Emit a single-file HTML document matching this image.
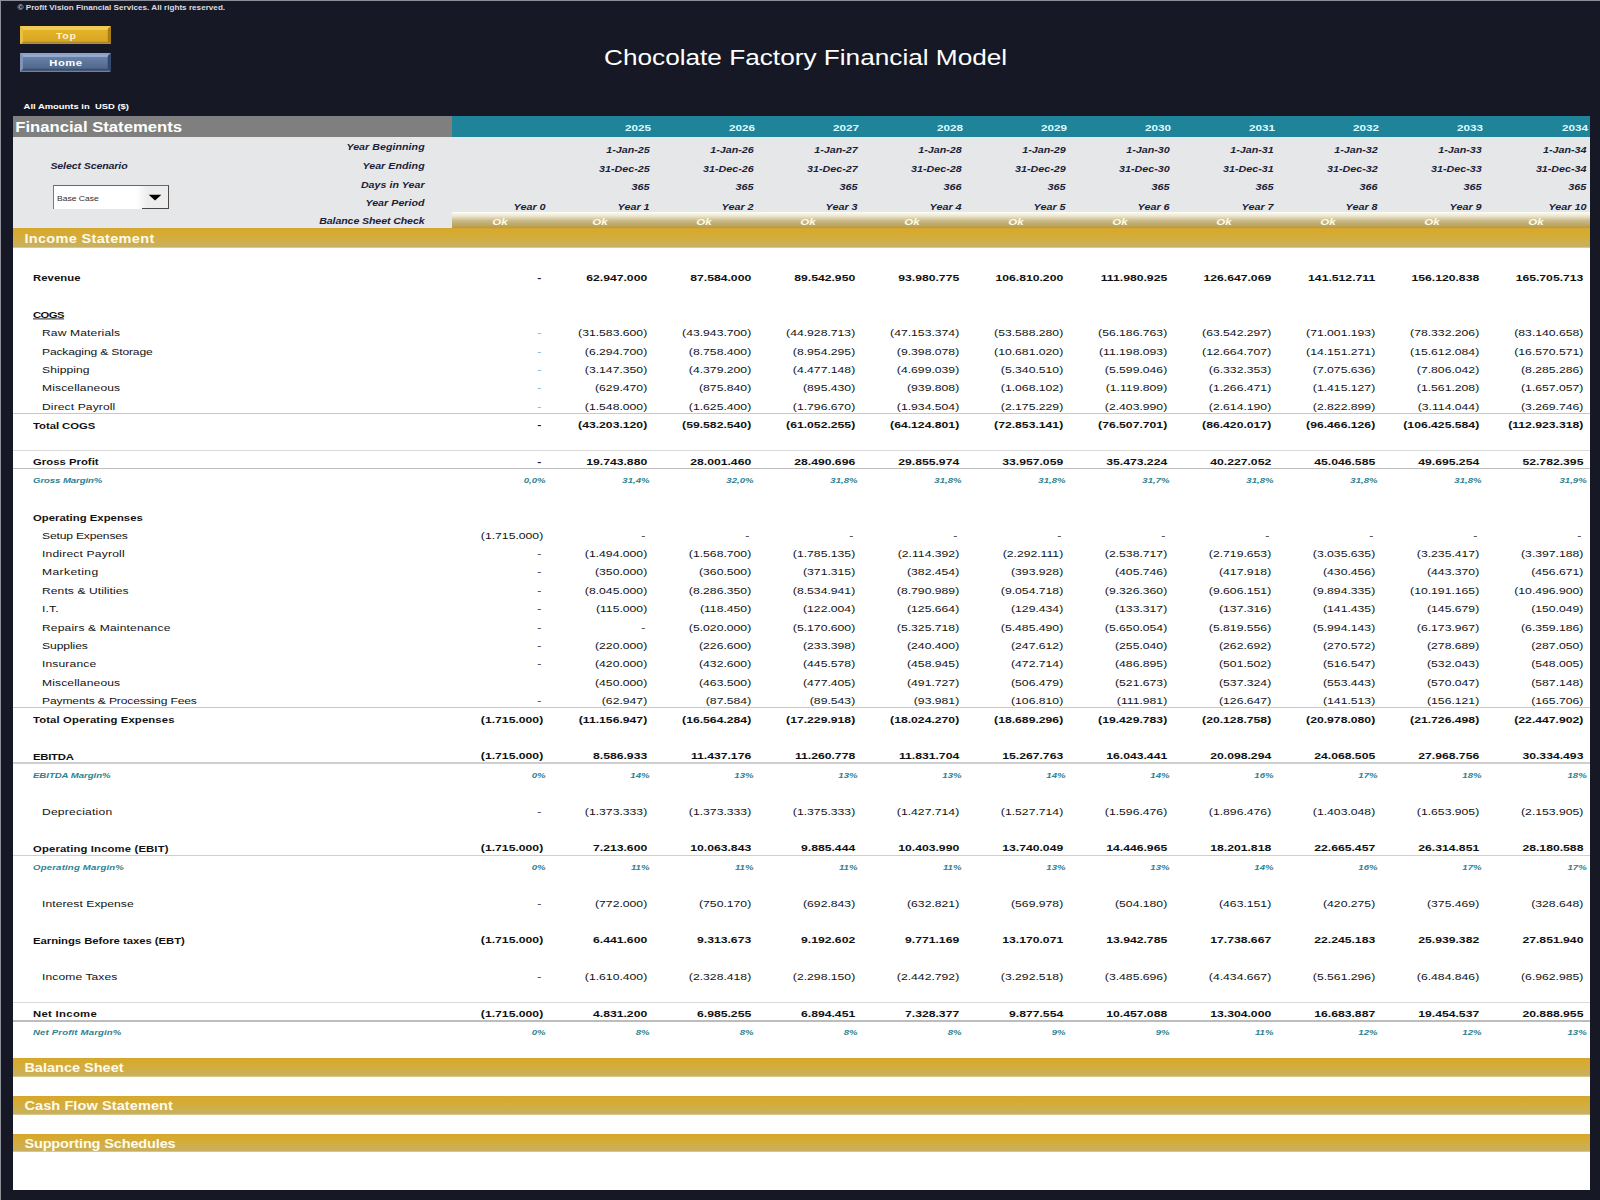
<!DOCTYPE html>
<html lang="en">
<head>
<meta charset="utf-8">
<title>Chocolate Factory Financial Model</title>
<style>
*{margin:0;padding:0;box-sizing:border-box}
html,body{width:1600px;height:1200px;overflow:hidden}
body{background:#161925;font-family:"Liberation Sans",sans-serif;position:relative;color:#141414}
.abs{position:absolute}
.t{position:absolute;white-space:nowrap;line-height:1;color:#121212}
.b{font-weight:bold}
.i{font-style:italic}
.sheet{position:absolute;left:13px;top:116px;width:1577px;height:1074px;background:#fff}
.hdr-gray{position:absolute;left:13px;top:116px;width:439px;height:21px;background:#7f7f7f}
.hdr-teal{position:absolute;left:452px;top:116px;width:1138px;height:21px;background:#1f8399}
.info{position:absolute;left:13px;top:137px;width:1577px;height:91px;background:#e6e7e9}
.okbar{position:absolute;left:452px;top:212.4px;width:1138px;height:16px;background:linear-gradient(#fffef6 0%,#ece6d0 25%,#c9b988 55%,#b79a45 100%)}
.gold{position:absolute;left:13px;width:1577px;height:18.7px;background:linear-gradient(#cfa433 0,#d8a92a 7%,#d3ac3b 45%,#c9b062 94%,#e6d9a6 100%)}
.rule{position:absolute;left:13px;width:1577px}
.btn{position:absolute;left:20px;width:90px;height:18.5px;border-radius:2px}
</style>
</head>
<body>

<div class="abs" style="left:0;top:0;width:1600px;height:1px;background:#8d8f96"></div>
<div class="abs" style="left:0;top:0;width:1px;height:1200px;background:#8d8f96"></div>
<div class="t b" style="left:17.50px;top:3.59px;font-size:8.1px;transform:scaleY(0.84);letter-spacing:0.027px;color:#dcdce0">© Profit Vision Financial Services. All rights reserved.</div>
<svg class="abs" style="left:20.1px;top:25.6px" width="90.8" height="18.8" viewBox="0 0 90.8 18.8"><defs><linearGradient id="gf" x1="0" y1="0" x2="0" y2="1"><stop offset="0" stop-color="#e6b52e"/><stop offset="1" stop-color="#d8a31c"/></linearGradient></defs><rect x="0" y="0" width="90.8" height="18.8" fill="url(#gf)"/><polygon points="0,0 90.8,0 87.8,3.0 3.0,3.0" fill="#f2cb4e"/><polygon points="0,18.8 90.8,18.8 87.8,15.8 3.0,15.8" fill="#a98636"/><polygon points="0,0 3.0,3.0 3.0,15.8 0,18.8" fill="#e9c042"/><polygon points="90.8,0 87.8,3.0 87.8,15.8 90.8,18.8" fill="#a57d16"/><rect x="3.0" y="2.7" width="84.8" height="0.9" fill="#f7dc7c"/><rect x="0" y="17.8" width="89.8" height="1" fill="#d3b867"/></svg>
<svg class="abs" style="left:20.1px;top:53.0px" width="90.8" height="18.8" viewBox="0 0 90.8 18.8"><defs><linearGradient id="hf" x1="0" y1="0" x2="0" y2="1"><stop offset="0" stop-color="#7189b0"/><stop offset="1" stop-color="#4b6186"/></linearGradient></defs><rect x="0" y="0" width="90.8" height="18.8" fill="url(#hf)"/><polygon points="0,0 90.8,0 87.8,3.0 3.0,3.0" fill="#8aa2c8"/><polygon points="0,18.8 90.8,18.8 87.8,15.8 3.0,15.8" fill="#3a4c6d"/><polygon points="0,0 3.0,3.0 3.0,15.8 0,18.8" fill="#7d95bc"/><polygon points="90.8,0 87.8,3.0 87.8,15.8 90.8,18.8" fill="#33456a"/><rect x="3.0" y="2.7" width="84.8" height="0.9" fill="#aec4ea"/><rect x="0" y="17.8" width="89.8" height="1" fill="#7f8fac"/></svg>
<div class="t b" style="left:55.96px;top:31.08px;font-size:10.6px;transform:scaleY(0.85);letter-spacing:0.720px;color:#fff3d2">Top</div>
<div class="t b" style="left:49.29px;top:58.14px;font-size:11.2px;transform:scaleY(0.84);letter-spacing:0.571px;color:#ffffff">Home</div>
<div class="t" style="left:604.00px;top:44.18px;font-size:26.2px;transform:scaleY(0.85);color:#ffffff">Chocolate Factory Financial Model</div>
<div class="t b" style="left:23.60px;top:101.97px;font-size:9.44px;transform:scaleY(0.83);color:#ffffff">All Amounts in  USD ($)</div>
<div class="sheet"></div>
<div class="hdr-gray"></div><div class="hdr-teal"></div>
<div class="info"></div>
<div class="abs" style="left:452px;top:136.8px;width:1138px;height:1.2px;background:#cfeef6"></div>
<div class="okbar"></div>
<div class="t b" style="left:15.20px;top:119.84px;font-size:16.7px;transform:scaleY(0.865);color:#ffffff">Financial Statements</div>
<div class="t b" style="right:949.00px;top:121.53px;font-size:11.7px;transform:scaleY(0.82);color:#dcfbff">2025</div>
<div class="t b" style="right:845.00px;top:121.53px;font-size:11.7px;transform:scaleY(0.82);color:#dcfbff">2026</div>
<div class="t b" style="right:741.00px;top:121.53px;font-size:11.7px;transform:scaleY(0.82);color:#dcfbff">2027</div>
<div class="t b" style="right:637.00px;top:121.53px;font-size:11.7px;transform:scaleY(0.82);color:#dcfbff">2028</div>
<div class="t b" style="right:533.00px;top:121.53px;font-size:11.7px;transform:scaleY(0.82);color:#dcfbff">2029</div>
<div class="t b" style="right:429.00px;top:121.53px;font-size:11.7px;transform:scaleY(0.82);color:#dcfbff">2030</div>
<div class="t b" style="right:325.00px;top:121.53px;font-size:11.7px;transform:scaleY(0.82);color:#dcfbff">2031</div>
<div class="t b" style="right:221.00px;top:121.53px;font-size:11.7px;transform:scaleY(0.82);color:#dcfbff">2032</div>
<div class="t b" style="right:117.00px;top:121.53px;font-size:11.7px;transform:scaleY(0.82);color:#dcfbff">2033</div>
<div class="t b" style="right:12.00px;top:121.53px;font-size:11.7px;transform:scaleY(0.82);color:#dcfbff">2034</div>
<div class="t b i" style="right:1175.33px;top:141.58px;font-size:10.6px;transform:scaleY(0.85);letter-spacing:0.068px;color:#1b2136">Year Beginning</div>
<div class="t b i" style="right:1175.32px;top:160.58px;font-size:10.6px;transform:scaleY(0.85);letter-spacing:0.077px;color:#1b2136">Year Ending</div>
<div class="t b i" style="right:1175.34px;top:179.58px;font-size:10.6px;transform:scaleY(0.85);letter-spacing:0.062px;color:#1b2136">Days in Year</div>
<div class="t b i" style="right:1175.33px;top:198.18px;font-size:10.6px;transform:scaleY(0.85);letter-spacing:0.071px;color:#1b2136">Year Period</div>
<div class="t b i" style="right:1175.50px;top:215.58px;font-size:10.6px;transform:scaleY(0.85);letter-spacing:-0.102px;color:#1b2136">Balance Sheet Check</div>
<div class="t b i" style="left:50.40px;top:160.68px;font-size:10.6px;transform:scaleY(0.85);letter-spacing:-0.117px;color:#1b2136">Select Scenario</div>
<div class="abs" style="left:53px;top:184.8px;width:116px;height:24px;background:linear-gradient(90deg,#fff 0,#fff 72%,#ededed 82%,#ececec 100%);border-top:1.3px solid #6a6a6a;border-left:1.2px solid #7a7a7a;border-right:1.2px solid #4a4a4a"></div>
<div class="abs" style="left:142px;top:207.6px;width:27px;height:1.2px;background:#4a4a4a"></div>
<svg class="abs" style="left:148px;top:194px" width="14" height="7" viewBox="0 0 14 7"><path d="M0.7 0.7 H13.4 L7.05 6.4 Z" fill="#000"/></svg>
<div class="t" style="left:57.00px;top:194.01px;font-size:8.56px;transform:scaleY(0.88);color:#303030">Base Case</div>
<div class="t b i" style="right:950.40px;top:145.04px;font-size:10.7px;transform:scaleY(0.84);color:#1b2136">1-Jan-25</div>
<div class="t b i" style="right:950.40px;top:163.94px;font-size:10.7px;transform:scaleY(0.84);color:#1b2136">31-Dec-25</div>
<div class="t b i" style="right:950.40px;top:182.48px;font-size:10.9px;transform:scaleY(0.84);color:#1b2136">365</div>
<div class="t b i" style="right:846.40px;top:145.04px;font-size:10.7px;transform:scaleY(0.84);color:#1b2136">1-Jan-26</div>
<div class="t b i" style="right:846.40px;top:163.94px;font-size:10.7px;transform:scaleY(0.84);color:#1b2136">31-Dec-26</div>
<div class="t b i" style="right:846.40px;top:182.48px;font-size:10.9px;transform:scaleY(0.84);color:#1b2136">365</div>
<div class="t b i" style="right:742.40px;top:145.04px;font-size:10.7px;transform:scaleY(0.84);color:#1b2136">1-Jan-27</div>
<div class="t b i" style="right:742.40px;top:163.94px;font-size:10.7px;transform:scaleY(0.84);color:#1b2136">31-Dec-27</div>
<div class="t b i" style="right:742.40px;top:182.48px;font-size:10.9px;transform:scaleY(0.84);color:#1b2136">365</div>
<div class="t b i" style="right:638.40px;top:145.04px;font-size:10.7px;transform:scaleY(0.84);color:#1b2136">1-Jan-28</div>
<div class="t b i" style="right:638.40px;top:163.94px;font-size:10.7px;transform:scaleY(0.84);color:#1b2136">31-Dec-28</div>
<div class="t b i" style="right:638.40px;top:182.48px;font-size:10.9px;transform:scaleY(0.84);color:#1b2136">366</div>
<div class="t b i" style="right:534.40px;top:145.04px;font-size:10.7px;transform:scaleY(0.84);color:#1b2136">1-Jan-29</div>
<div class="t b i" style="right:534.40px;top:163.94px;font-size:10.7px;transform:scaleY(0.84);color:#1b2136">31-Dec-29</div>
<div class="t b i" style="right:534.40px;top:182.48px;font-size:10.9px;transform:scaleY(0.84);color:#1b2136">365</div>
<div class="t b i" style="right:430.40px;top:145.04px;font-size:10.7px;transform:scaleY(0.84);color:#1b2136">1-Jan-30</div>
<div class="t b i" style="right:430.40px;top:163.94px;font-size:10.7px;transform:scaleY(0.84);color:#1b2136">31-Dec-30</div>
<div class="t b i" style="right:430.40px;top:182.48px;font-size:10.9px;transform:scaleY(0.84);color:#1b2136">365</div>
<div class="t b i" style="right:326.40px;top:145.04px;font-size:10.7px;transform:scaleY(0.84);color:#1b2136">1-Jan-31</div>
<div class="t b i" style="right:326.40px;top:163.94px;font-size:10.7px;transform:scaleY(0.84);color:#1b2136">31-Dec-31</div>
<div class="t b i" style="right:326.40px;top:182.48px;font-size:10.9px;transform:scaleY(0.84);color:#1b2136">365</div>
<div class="t b i" style="right:222.40px;top:145.04px;font-size:10.7px;transform:scaleY(0.84);color:#1b2136">1-Jan-32</div>
<div class="t b i" style="right:222.40px;top:163.94px;font-size:10.7px;transform:scaleY(0.84);color:#1b2136">31-Dec-32</div>
<div class="t b i" style="right:222.40px;top:182.48px;font-size:10.9px;transform:scaleY(0.84);color:#1b2136">366</div>
<div class="t b i" style="right:118.40px;top:145.04px;font-size:10.7px;transform:scaleY(0.84);color:#1b2136">1-Jan-33</div>
<div class="t b i" style="right:118.40px;top:163.94px;font-size:10.7px;transform:scaleY(0.84);color:#1b2136">31-Dec-33</div>
<div class="t b i" style="right:118.40px;top:182.48px;font-size:10.9px;transform:scaleY(0.84);color:#1b2136">365</div>
<div class="t b i" style="right:13.60px;top:145.04px;font-size:10.7px;transform:scaleY(0.84);color:#1b2136">1-Jan-34</div>
<div class="t b i" style="right:13.60px;top:163.94px;font-size:10.7px;transform:scaleY(0.84);color:#1b2136">31-Dec-34</div>
<div class="t b i" style="right:13.60px;top:182.48px;font-size:10.9px;transform:scaleY(0.84);color:#1b2136">365</div>
<div class="t b i" style="right:1054.40px;top:201.66px;font-size:10.8px;transform:scaleY(0.84);color:#1b2136">Year 0</div>
<div class="t b i" style="left:492.33px;top:216.50px;font-size:11.5px;transform:scaleY(0.84);color:#fffbe6">Ok</div>
<div class="t b i" style="right:950.40px;top:201.66px;font-size:10.8px;transform:scaleY(0.84);color:#1b2136">Year 1</div>
<div class="t b i" style="left:592.33px;top:216.50px;font-size:11.5px;transform:scaleY(0.84);color:#fffbe6">Ok</div>
<div class="t b i" style="right:846.40px;top:201.66px;font-size:10.8px;transform:scaleY(0.84);color:#1b2136">Year 2</div>
<div class="t b i" style="left:696.33px;top:216.50px;font-size:11.5px;transform:scaleY(0.84);color:#fffbe6">Ok</div>
<div class="t b i" style="right:742.40px;top:201.66px;font-size:10.8px;transform:scaleY(0.84);color:#1b2136">Year 3</div>
<div class="t b i" style="left:800.33px;top:216.50px;font-size:11.5px;transform:scaleY(0.84);color:#fffbe6">Ok</div>
<div class="t b i" style="right:638.40px;top:201.66px;font-size:10.8px;transform:scaleY(0.84);color:#1b2136">Year 4</div>
<div class="t b i" style="left:904.33px;top:216.50px;font-size:11.5px;transform:scaleY(0.84);color:#fffbe6">Ok</div>
<div class="t b i" style="right:534.40px;top:201.66px;font-size:10.8px;transform:scaleY(0.84);color:#1b2136">Year 5</div>
<div class="t b i" style="left:1008.33px;top:216.50px;font-size:11.5px;transform:scaleY(0.84);color:#fffbe6">Ok</div>
<div class="t b i" style="right:430.40px;top:201.66px;font-size:10.8px;transform:scaleY(0.84);color:#1b2136">Year 6</div>
<div class="t b i" style="left:1112.33px;top:216.50px;font-size:11.5px;transform:scaleY(0.84);color:#fffbe6">Ok</div>
<div class="t b i" style="right:326.40px;top:201.66px;font-size:10.8px;transform:scaleY(0.84);color:#1b2136">Year 7</div>
<div class="t b i" style="left:1216.33px;top:216.50px;font-size:11.5px;transform:scaleY(0.84);color:#fffbe6">Ok</div>
<div class="t b i" style="right:222.40px;top:201.66px;font-size:10.8px;transform:scaleY(0.84);color:#1b2136">Year 8</div>
<div class="t b i" style="left:1320.33px;top:216.50px;font-size:11.5px;transform:scaleY(0.84);color:#fffbe6">Ok</div>
<div class="t b i" style="right:118.40px;top:201.66px;font-size:10.8px;transform:scaleY(0.84);color:#1b2136">Year 9</div>
<div class="t b i" style="left:1424.33px;top:216.50px;font-size:11.5px;transform:scaleY(0.84);color:#fffbe6">Ok</div>
<div class="t b i" style="right:13.60px;top:201.66px;font-size:10.8px;transform:scaleY(0.84);color:#1b2136">Year 10</div>
<div class="t b i" style="left:1528.33px;top:216.50px;font-size:11.5px;transform:scaleY(0.84);color:#fffbe6">Ok</div>
<div class="gold" style="top:228.4px;height:19.5px"></div>
<div class="t b" style="left:24.40px;top:231.83px;font-size:14.5px;transform:scaleY(0.82);letter-spacing:0.332px;color:#fffbea">Income Statement</div>
<div class="gold" style="top:1058.2px;height:18.6px"></div>
<div class="t b" style="left:24.40px;top:1061.43px;font-size:14.5px;transform:scaleY(0.82);color:#fffbea">Balance Sheet</div>
<div class="gold" style="top:1095.9px;height:18.7px"></div>
<div class="t b" style="left:24.40px;top:1099.13px;font-size:14.5px;transform:scaleY(0.82);letter-spacing:0.103px;color:#fffbea">Cash Flow Statement</div>
<div class="gold" style="top:1133.7px;height:18.8px"></div>
<div class="t b" style="left:24.40px;top:1136.73px;font-size:14.5px;transform:scaleY(0.82);letter-spacing:-0.139px;color:#fffbea">Supporting Schedules</div>
<div class="rule" style="top:413px;height:1px;background:#c8c8c8"></div>
<div class="rule" style="top:449.6px;height:1px;background:#dadada"></div>
<div class="rule" style="top:467.6px;height:1.6px;background:#bdbdbd"></div>
<div class="rule" style="top:706.8px;height:1px;background:#c8c8c8"></div>
<div class="rule" style="top:762.0px;height:1.6px;background:#cfcfcf"></div>
<div class="rule" style="top:854.5px;height:1.6px;background:#cfcfcf"></div>
<div class="rule" style="top:1002px;height:1px;background:#dadada"></div>
<div class="rule" style="top:1020.0px;height:1.6px;background:#bdbdbd"></div>
<div class="t b" style="left:33.00px;top:272.30px;font-size:11.3px;transform:scaleY(0.88);letter-spacing:0.071px;color:#111">Revenue</div>
<div class="t b" style="right:1058.80px;top:271.92px;font-size:12.2px;transform:scaleY(0.8);color:#111">-</div>
<div class="t b" style="right:952.80px;top:271.92px;font-size:12.2px;transform:scaleY(0.8);color:#111">62.947.000</div>
<div class="t b" style="right:848.80px;top:271.92px;font-size:12.2px;transform:scaleY(0.8);color:#111">87.584.000</div>
<div class="t b" style="right:744.80px;top:271.92px;font-size:12.2px;transform:scaleY(0.8);color:#111">89.542.950</div>
<div class="t b" style="right:640.80px;top:271.92px;font-size:12.2px;transform:scaleY(0.8);color:#111">93.980.775</div>
<div class="t b" style="right:536.80px;top:271.92px;font-size:12.2px;transform:scaleY(0.8);color:#111">106.810.200</div>
<div class="t b" style="right:432.80px;top:271.92px;font-size:12.2px;transform:scaleY(0.8);color:#111">111.980.925</div>
<div class="t b" style="right:328.80px;top:271.92px;font-size:12.2px;transform:scaleY(0.8);color:#111">126.647.069</div>
<div class="t b" style="right:224.80px;top:271.92px;font-size:12.2px;transform:scaleY(0.8);color:#111">141.512.711</div>
<div class="t b" style="right:120.80px;top:271.92px;font-size:12.2px;transform:scaleY(0.8);color:#111">156.120.838</div>
<div class="t b" style="right:16.60px;top:271.92px;font-size:12.2px;transform:scaleY(0.8);color:#111">165.705.713</div>
<div class="t b" style="left:33.00px;top:309.10px;font-size:11.3px;transform:scaleY(0.88);letter-spacing:-0.544px;color:#111;text-decoration:underline;text-underline-offset:1px">COGS</div>
<div class="t" style="left:42.00px;top:327.15px;font-size:12.1px;transform:scaleY(0.81);letter-spacing:0.127px">Raw Materials</div>
<div class="t" style="right:1058.80px;top:327.12px;font-size:12.2px;transform:scaleY(0.8);color:#62aebb">-</div>
<div class="t" style="right:952.80px;top:327.12px;font-size:12.2px;transform:scaleY(0.8)">(31.583.600)</div>
<div class="t" style="right:848.80px;top:327.12px;font-size:12.2px;transform:scaleY(0.8)">(43.943.700)</div>
<div class="t" style="right:744.80px;top:327.12px;font-size:12.2px;transform:scaleY(0.8)">(44.928.713)</div>
<div class="t" style="right:640.80px;top:327.12px;font-size:12.2px;transform:scaleY(0.8)">(47.153.374)</div>
<div class="t" style="right:536.80px;top:327.12px;font-size:12.2px;transform:scaleY(0.8)">(53.588.280)</div>
<div class="t" style="right:432.80px;top:327.12px;font-size:12.2px;transform:scaleY(0.8)">(56.186.763)</div>
<div class="t" style="right:328.80px;top:327.12px;font-size:12.2px;transform:scaleY(0.8)">(63.542.297)</div>
<div class="t" style="right:224.80px;top:327.12px;font-size:12.2px;transform:scaleY(0.8)">(71.001.193)</div>
<div class="t" style="right:120.80px;top:327.12px;font-size:12.2px;transform:scaleY(0.8)">(78.332.206)</div>
<div class="t" style="right:16.60px;top:327.12px;font-size:12.2px;transform:scaleY(0.8)">(83.140.658)</div>
<div class="t" style="left:42.00px;top:345.55px;font-size:12.1px;transform:scaleY(0.81);letter-spacing:-0.162px">Packaging &amp; Storage</div>
<div class="t" style="right:1058.80px;top:345.52px;font-size:12.2px;transform:scaleY(0.8);color:#62aebb">-</div>
<div class="t" style="right:952.80px;top:345.52px;font-size:12.2px;transform:scaleY(0.8)">(6.294.700)</div>
<div class="t" style="right:848.80px;top:345.52px;font-size:12.2px;transform:scaleY(0.8)">(8.758.400)</div>
<div class="t" style="right:744.80px;top:345.52px;font-size:12.2px;transform:scaleY(0.8)">(8.954.295)</div>
<div class="t" style="right:640.80px;top:345.52px;font-size:12.2px;transform:scaleY(0.8)">(9.398.078)</div>
<div class="t" style="right:536.80px;top:345.52px;font-size:12.2px;transform:scaleY(0.8)">(10.681.020)</div>
<div class="t" style="right:432.80px;top:345.52px;font-size:12.2px;transform:scaleY(0.8)">(11.198.093)</div>
<div class="t" style="right:328.80px;top:345.52px;font-size:12.2px;transform:scaleY(0.8)">(12.664.707)</div>
<div class="t" style="right:224.80px;top:345.52px;font-size:12.2px;transform:scaleY(0.8)">(14.151.271)</div>
<div class="t" style="right:120.80px;top:345.52px;font-size:12.2px;transform:scaleY(0.8)">(15.612.084)</div>
<div class="t" style="right:16.60px;top:345.52px;font-size:12.2px;transform:scaleY(0.8)">(16.570.571)</div>
<div class="t" style="left:42.00px;top:363.95px;font-size:12.1px;transform:scaleY(0.81);letter-spacing:0.063px">Shipping</div>
<div class="t" style="right:1058.80px;top:363.92px;font-size:12.2px;transform:scaleY(0.8);color:#62aebb">-</div>
<div class="t" style="right:952.80px;top:363.92px;font-size:12.2px;transform:scaleY(0.8)">(3.147.350)</div>
<div class="t" style="right:848.80px;top:363.92px;font-size:12.2px;transform:scaleY(0.8)">(4.379.200)</div>
<div class="t" style="right:744.80px;top:363.92px;font-size:12.2px;transform:scaleY(0.8)">(4.477.148)</div>
<div class="t" style="right:640.80px;top:363.92px;font-size:12.2px;transform:scaleY(0.8)">(4.699.039)</div>
<div class="t" style="right:536.80px;top:363.92px;font-size:12.2px;transform:scaleY(0.8)">(5.340.510)</div>
<div class="t" style="right:432.80px;top:363.92px;font-size:12.2px;transform:scaleY(0.8)">(5.599.046)</div>
<div class="t" style="right:328.80px;top:363.92px;font-size:12.2px;transform:scaleY(0.8)">(6.332.353)</div>
<div class="t" style="right:224.80px;top:363.92px;font-size:12.2px;transform:scaleY(0.8)">(7.075.636)</div>
<div class="t" style="right:120.80px;top:363.92px;font-size:12.2px;transform:scaleY(0.8)">(7.806.042)</div>
<div class="t" style="right:16.60px;top:363.92px;font-size:12.2px;transform:scaleY(0.8)">(8.285.286)</div>
<div class="t" style="left:42.00px;top:382.35px;font-size:12.1px;transform:scaleY(0.81);letter-spacing:0.125px">Miscellaneous</div>
<div class="t" style="right:1058.80px;top:382.32px;font-size:12.2px;transform:scaleY(0.8);color:#62aebb">-</div>
<div class="t" style="right:952.80px;top:382.32px;font-size:12.2px;transform:scaleY(0.8)">(629.470)</div>
<div class="t" style="right:848.80px;top:382.32px;font-size:12.2px;transform:scaleY(0.8)">(875.840)</div>
<div class="t" style="right:744.80px;top:382.32px;font-size:12.2px;transform:scaleY(0.8)">(895.430)</div>
<div class="t" style="right:640.80px;top:382.32px;font-size:12.2px;transform:scaleY(0.8)">(939.808)</div>
<div class="t" style="right:536.80px;top:382.32px;font-size:12.2px;transform:scaleY(0.8)">(1.068.102)</div>
<div class="t" style="right:432.80px;top:382.32px;font-size:12.2px;transform:scaleY(0.8)">(1.119.809)</div>
<div class="t" style="right:328.80px;top:382.32px;font-size:12.2px;transform:scaleY(0.8)">(1.266.471)</div>
<div class="t" style="right:224.80px;top:382.32px;font-size:12.2px;transform:scaleY(0.8)">(1.415.127)</div>
<div class="t" style="right:120.80px;top:382.32px;font-size:12.2px;transform:scaleY(0.8)">(1.561.208)</div>
<div class="t" style="right:16.60px;top:382.32px;font-size:12.2px;transform:scaleY(0.8)">(1.657.057)</div>
<div class="t" style="left:42.00px;top:400.75px;font-size:12.1px;transform:scaleY(0.81);letter-spacing:0.104px">Direct Payroll</div>
<div class="t" style="right:1058.80px;top:400.72px;font-size:12.2px;transform:scaleY(0.8);color:#62aebb">-</div>
<div class="t" style="right:952.80px;top:400.72px;font-size:12.2px;transform:scaleY(0.8)">(1.548.000)</div>
<div class="t" style="right:848.80px;top:400.72px;font-size:12.2px;transform:scaleY(0.8)">(1.625.400)</div>
<div class="t" style="right:744.80px;top:400.72px;font-size:12.2px;transform:scaleY(0.8)">(1.796.670)</div>
<div class="t" style="right:640.80px;top:400.72px;font-size:12.2px;transform:scaleY(0.8)">(1.934.504)</div>
<div class="t" style="right:536.80px;top:400.72px;font-size:12.2px;transform:scaleY(0.8)">(2.175.229)</div>
<div class="t" style="right:432.80px;top:400.72px;font-size:12.2px;transform:scaleY(0.8)">(2.403.990)</div>
<div class="t" style="right:328.80px;top:400.72px;font-size:12.2px;transform:scaleY(0.8)">(2.614.190)</div>
<div class="t" style="right:224.80px;top:400.72px;font-size:12.2px;transform:scaleY(0.8)">(2.822.899)</div>
<div class="t" style="right:120.80px;top:400.72px;font-size:12.2px;transform:scaleY(0.8)">(3.114.044)</div>
<div class="t" style="right:16.60px;top:400.72px;font-size:12.2px;transform:scaleY(0.8)">(3.269.746)</div>
<div class="t b" style="left:33.00px;top:419.50px;font-size:11.3px;transform:scaleY(0.88);letter-spacing:-0.027px;color:#111">Total COGS</div>
<div class="t b" style="right:1058.80px;top:419.12px;font-size:12.2px;transform:scaleY(0.8);color:#111">-</div>
<div class="t b" style="right:952.80px;top:419.12px;font-size:12.2px;transform:scaleY(0.8);color:#111">(43.203.120)</div>
<div class="t b" style="right:848.80px;top:419.12px;font-size:12.2px;transform:scaleY(0.8);color:#111">(59.582.540)</div>
<div class="t b" style="right:744.80px;top:419.12px;font-size:12.2px;transform:scaleY(0.8);color:#111">(61.052.255)</div>
<div class="t b" style="right:640.80px;top:419.12px;font-size:12.2px;transform:scaleY(0.8);color:#111">(64.124.801)</div>
<div class="t b" style="right:536.80px;top:419.12px;font-size:12.2px;transform:scaleY(0.8);color:#111">(72.853.141)</div>
<div class="t b" style="right:432.80px;top:419.12px;font-size:12.2px;transform:scaleY(0.8);color:#111">(76.507.701)</div>
<div class="t b" style="right:328.80px;top:419.12px;font-size:12.2px;transform:scaleY(0.8);color:#111">(86.420.017)</div>
<div class="t b" style="right:224.80px;top:419.12px;font-size:12.2px;transform:scaleY(0.8);color:#111">(96.466.126)</div>
<div class="t b" style="right:120.80px;top:419.12px;font-size:12.2px;transform:scaleY(0.8);color:#111">(106.425.584)</div>
<div class="t b" style="right:16.60px;top:419.12px;font-size:12.2px;transform:scaleY(0.8);color:#111">(112.923.318)</div>
<div class="t b" style="left:33.00px;top:456.30px;font-size:11.3px;transform:scaleY(0.88);letter-spacing:0.025px;color:#111">Gross Profit</div>
<div class="t b" style="right:1058.80px;top:455.92px;font-size:12.2px;transform:scaleY(0.8);color:#111">-</div>
<div class="t b" style="right:952.80px;top:455.92px;font-size:12.2px;transform:scaleY(0.8);color:#111">19.743.880</div>
<div class="t b" style="right:848.80px;top:455.92px;font-size:12.2px;transform:scaleY(0.8);color:#111">28.001.460</div>
<div class="t b" style="right:744.80px;top:455.92px;font-size:12.2px;transform:scaleY(0.8);color:#111">28.490.696</div>
<div class="t b" style="right:640.80px;top:455.92px;font-size:12.2px;transform:scaleY(0.8);color:#111">29.855.974</div>
<div class="t b" style="right:536.80px;top:455.92px;font-size:12.2px;transform:scaleY(0.8);color:#111">33.957.059</div>
<div class="t b" style="right:432.80px;top:455.92px;font-size:12.2px;transform:scaleY(0.8);color:#111">35.473.224</div>
<div class="t b" style="right:328.80px;top:455.92px;font-size:12.2px;transform:scaleY(0.8);color:#111">40.227.052</div>
<div class="t b" style="right:224.80px;top:455.92px;font-size:12.2px;transform:scaleY(0.8);color:#111">45.046.585</div>
<div class="t b" style="right:120.80px;top:455.92px;font-size:12.2px;transform:scaleY(0.8);color:#111">49.695.254</div>
<div class="t b" style="right:16.60px;top:455.92px;font-size:12.2px;transform:scaleY(0.8);color:#111">52.782.395</div>
<div class="t b i" style="left:33.00px;top:476.47px;font-size:9.6px;transform:scaleY(0.82);letter-spacing:-0.086px;color:#2f8290">Gross Margin%</div>
<div class="t b i" style="right:1054.50px;top:476.47px;font-size:9.6px;transform:scaleY(0.82);color:#2f8290">0,0%</div>
<div class="t b i" style="right:950.50px;top:476.47px;font-size:9.6px;transform:scaleY(0.82);color:#2f8290">31,4%</div>
<div class="t b i" style="right:846.50px;top:476.47px;font-size:9.6px;transform:scaleY(0.82);color:#2f8290">32,0%</div>
<div class="t b i" style="right:742.50px;top:476.47px;font-size:9.6px;transform:scaleY(0.82);color:#2f8290">31,8%</div>
<div class="t b i" style="right:638.50px;top:476.47px;font-size:9.6px;transform:scaleY(0.82);color:#2f8290">31,8%</div>
<div class="t b i" style="right:534.50px;top:476.47px;font-size:9.6px;transform:scaleY(0.82);color:#2f8290">31,8%</div>
<div class="t b i" style="right:430.50px;top:476.47px;font-size:9.6px;transform:scaleY(0.82);color:#2f8290">31,7%</div>
<div class="t b i" style="right:326.50px;top:476.47px;font-size:9.6px;transform:scaleY(0.82);color:#2f8290">31,8%</div>
<div class="t b i" style="right:222.50px;top:476.47px;font-size:9.6px;transform:scaleY(0.82);color:#2f8290">31,8%</div>
<div class="t b i" style="right:118.50px;top:476.47px;font-size:9.6px;transform:scaleY(0.82);color:#2f8290">31,8%</div>
<div class="t b i" style="right:13.30px;top:476.47px;font-size:9.6px;transform:scaleY(0.82);color:#2f8290">31,9%</div>
<div class="t b" style="left:33.00px;top:511.50px;font-size:11.3px;transform:scaleY(0.88);letter-spacing:0.029px;color:#111">Operating Expenses</div>
<div class="t" style="left:42.00px;top:529.55px;font-size:12.1px;transform:scaleY(0.81);letter-spacing:-0.166px">Setup Expenses</div>
<div class="t" style="right:1056.80px;top:529.52px;font-size:12.2px;transform:scaleY(0.8)">(1.715.000)</div>
<div class="t" style="right:954.80px;top:529.52px;font-size:12.2px;transform:scaleY(0.8)">-</div>
<div class="t" style="right:850.80px;top:529.52px;font-size:12.2px;transform:scaleY(0.8)">-</div>
<div class="t" style="right:746.80px;top:529.52px;font-size:12.2px;transform:scaleY(0.8)">-</div>
<div class="t" style="right:642.80px;top:529.52px;font-size:12.2px;transform:scaleY(0.8)">-</div>
<div class="t" style="right:538.80px;top:529.52px;font-size:12.2px;transform:scaleY(0.8)">-</div>
<div class="t" style="right:434.80px;top:529.52px;font-size:12.2px;transform:scaleY(0.8)">-</div>
<div class="t" style="right:330.80px;top:529.52px;font-size:12.2px;transform:scaleY(0.8)">-</div>
<div class="t" style="right:226.80px;top:529.52px;font-size:12.2px;transform:scaleY(0.8)">-</div>
<div class="t" style="right:122.80px;top:529.52px;font-size:12.2px;transform:scaleY(0.8)">-</div>
<div class="t" style="right:18.60px;top:529.52px;font-size:12.2px;transform:scaleY(0.8)">-</div>
<div class="t" style="left:42.00px;top:547.95px;font-size:12.1px;transform:scaleY(0.81);letter-spacing:0.173px">Indirect Payroll</div>
<div class="t" style="right:1058.80px;top:547.92px;font-size:12.2px;transform:scaleY(0.8)">-</div>
<div class="t" style="right:952.80px;top:547.92px;font-size:12.2px;transform:scaleY(0.8)">(1.494.000)</div>
<div class="t" style="right:848.80px;top:547.92px;font-size:12.2px;transform:scaleY(0.8)">(1.568.700)</div>
<div class="t" style="right:744.80px;top:547.92px;font-size:12.2px;transform:scaleY(0.8)">(1.785.135)</div>
<div class="t" style="right:640.80px;top:547.92px;font-size:12.2px;transform:scaleY(0.8)">(2.114.392)</div>
<div class="t" style="right:536.80px;top:547.92px;font-size:12.2px;transform:scaleY(0.8)">(2.292.111)</div>
<div class="t" style="right:432.80px;top:547.92px;font-size:12.2px;transform:scaleY(0.8)">(2.538.717)</div>
<div class="t" style="right:328.80px;top:547.92px;font-size:12.2px;transform:scaleY(0.8)">(2.719.653)</div>
<div class="t" style="right:224.80px;top:547.92px;font-size:12.2px;transform:scaleY(0.8)">(3.035.635)</div>
<div class="t" style="right:120.80px;top:547.92px;font-size:12.2px;transform:scaleY(0.8)">(3.235.417)</div>
<div class="t" style="right:16.60px;top:547.92px;font-size:12.2px;transform:scaleY(0.8)">(3.397.188)</div>
<div class="t" style="left:42.00px;top:566.35px;font-size:12.1px;transform:scaleY(0.81);letter-spacing:0.386px">Marketing</div>
<div class="t" style="right:1058.80px;top:566.32px;font-size:12.2px;transform:scaleY(0.8)">-</div>
<div class="t" style="right:952.80px;top:566.32px;font-size:12.2px;transform:scaleY(0.8)">(350.000)</div>
<div class="t" style="right:848.80px;top:566.32px;font-size:12.2px;transform:scaleY(0.8)">(360.500)</div>
<div class="t" style="right:744.80px;top:566.32px;font-size:12.2px;transform:scaleY(0.8)">(371.315)</div>
<div class="t" style="right:640.80px;top:566.32px;font-size:12.2px;transform:scaleY(0.8)">(382.454)</div>
<div class="t" style="right:536.80px;top:566.32px;font-size:12.2px;transform:scaleY(0.8)">(393.928)</div>
<div class="t" style="right:432.80px;top:566.32px;font-size:12.2px;transform:scaleY(0.8)">(405.746)</div>
<div class="t" style="right:328.80px;top:566.32px;font-size:12.2px;transform:scaleY(0.8)">(417.918)</div>
<div class="t" style="right:224.80px;top:566.32px;font-size:12.2px;transform:scaleY(0.8)">(430.456)</div>
<div class="t" style="right:120.80px;top:566.32px;font-size:12.2px;transform:scaleY(0.8)">(443.370)</div>
<div class="t" style="right:16.60px;top:566.32px;font-size:12.2px;transform:scaleY(0.8)">(456.671)</div>
<div class="t" style="left:42.00px;top:584.75px;font-size:12.1px;transform:scaleY(0.81);letter-spacing:0.071px">Rents &amp; Utilities</div>
<div class="t" style="right:1058.80px;top:584.72px;font-size:12.2px;transform:scaleY(0.8)">-</div>
<div class="t" style="right:952.80px;top:584.72px;font-size:12.2px;transform:scaleY(0.8)">(8.045.000)</div>
<div class="t" style="right:848.80px;top:584.72px;font-size:12.2px;transform:scaleY(0.8)">(8.286.350)</div>
<div class="t" style="right:744.80px;top:584.72px;font-size:12.2px;transform:scaleY(0.8)">(8.534.941)</div>
<div class="t" style="right:640.80px;top:584.72px;font-size:12.2px;transform:scaleY(0.8)">(8.790.989)</div>
<div class="t" style="right:536.80px;top:584.72px;font-size:12.2px;transform:scaleY(0.8)">(9.054.718)</div>
<div class="t" style="right:432.80px;top:584.72px;font-size:12.2px;transform:scaleY(0.8)">(9.326.360)</div>
<div class="t" style="right:328.80px;top:584.72px;font-size:12.2px;transform:scaleY(0.8)">(9.606.151)</div>
<div class="t" style="right:224.80px;top:584.72px;font-size:12.2px;transform:scaleY(0.8)">(9.894.335)</div>
<div class="t" style="right:120.80px;top:584.72px;font-size:12.2px;transform:scaleY(0.8)">(10.191.165)</div>
<div class="t" style="right:16.60px;top:584.72px;font-size:12.2px;transform:scaleY(0.8)">(10.496.900)</div>
<div class="t" style="left:42.00px;top:603.15px;font-size:12.1px;transform:scaleY(0.81);letter-spacing:0.166px">I.T.</div>
<div class="t" style="right:1058.80px;top:603.12px;font-size:12.2px;transform:scaleY(0.8)">-</div>
<div class="t" style="right:952.80px;top:603.12px;font-size:12.2px;transform:scaleY(0.8)">(115.000)</div>
<div class="t" style="right:848.80px;top:603.12px;font-size:12.2px;transform:scaleY(0.8)">(118.450)</div>
<div class="t" style="right:744.80px;top:603.12px;font-size:12.2px;transform:scaleY(0.8)">(122.004)</div>
<div class="t" style="right:640.80px;top:603.12px;font-size:12.2px;transform:scaleY(0.8)">(125.664)</div>
<div class="t" style="right:536.80px;top:603.12px;font-size:12.2px;transform:scaleY(0.8)">(129.434)</div>
<div class="t" style="right:432.80px;top:603.12px;font-size:12.2px;transform:scaleY(0.8)">(133.317)</div>
<div class="t" style="right:328.80px;top:603.12px;font-size:12.2px;transform:scaleY(0.8)">(137.316)</div>
<div class="t" style="right:224.80px;top:603.12px;font-size:12.2px;transform:scaleY(0.8)">(141.435)</div>
<div class="t" style="right:120.80px;top:603.12px;font-size:12.2px;transform:scaleY(0.8)">(145.679)</div>
<div class="t" style="right:16.60px;top:603.12px;font-size:12.2px;transform:scaleY(0.8)">(150.049)</div>
<div class="t" style="left:42.00px;top:621.55px;font-size:12.1px;transform:scaleY(0.81);letter-spacing:0.134px">Repairs &amp; Maintenance</div>
<div class="t" style="right:1058.80px;top:621.52px;font-size:12.2px;transform:scaleY(0.8)">-</div>
<div class="t" style="right:954.80px;top:621.52px;font-size:12.2px;transform:scaleY(0.8)">-</div>
<div class="t" style="right:848.80px;top:621.52px;font-size:12.2px;transform:scaleY(0.8)">(5.020.000)</div>
<div class="t" style="right:744.80px;top:621.52px;font-size:12.2px;transform:scaleY(0.8)">(5.170.600)</div>
<div class="t" style="right:640.80px;top:621.52px;font-size:12.2px;transform:scaleY(0.8)">(5.325.718)</div>
<div class="t" style="right:536.80px;top:621.52px;font-size:12.2px;transform:scaleY(0.8)">(5.485.490)</div>
<div class="t" style="right:432.80px;top:621.52px;font-size:12.2px;transform:scaleY(0.8)">(5.650.054)</div>
<div class="t" style="right:328.80px;top:621.52px;font-size:12.2px;transform:scaleY(0.8)">(5.819.556)</div>
<div class="t" style="right:224.80px;top:621.52px;font-size:12.2px;transform:scaleY(0.8)">(5.994.143)</div>
<div class="t" style="right:120.80px;top:621.52px;font-size:12.2px;transform:scaleY(0.8)">(6.173.967)</div>
<div class="t" style="right:16.60px;top:621.52px;font-size:12.2px;transform:scaleY(0.8)">(6.359.186)</div>
<div class="t" style="left:42.00px;top:639.95px;font-size:12.1px;transform:scaleY(0.81);letter-spacing:-0.077px">Supplies</div>
<div class="t" style="right:1058.80px;top:639.92px;font-size:12.2px;transform:scaleY(0.8)">-</div>
<div class="t" style="right:952.80px;top:639.92px;font-size:12.2px;transform:scaleY(0.8)">(220.000)</div>
<div class="t" style="right:848.80px;top:639.92px;font-size:12.2px;transform:scaleY(0.8)">(226.600)</div>
<div class="t" style="right:744.80px;top:639.92px;font-size:12.2px;transform:scaleY(0.8)">(233.398)</div>
<div class="t" style="right:640.80px;top:639.92px;font-size:12.2px;transform:scaleY(0.8)">(240.400)</div>
<div class="t" style="right:536.80px;top:639.92px;font-size:12.2px;transform:scaleY(0.8)">(247.612)</div>
<div class="t" style="right:432.80px;top:639.92px;font-size:12.2px;transform:scaleY(0.8)">(255.040)</div>
<div class="t" style="right:328.80px;top:639.92px;font-size:12.2px;transform:scaleY(0.8)">(262.692)</div>
<div class="t" style="right:224.80px;top:639.92px;font-size:12.2px;transform:scaleY(0.8)">(270.572)</div>
<div class="t" style="right:120.80px;top:639.92px;font-size:12.2px;transform:scaleY(0.8)">(278.689)</div>
<div class="t" style="right:16.60px;top:639.92px;font-size:12.2px;transform:scaleY(0.8)">(287.050)</div>
<div class="t" style="left:42.00px;top:658.35px;font-size:12.1px;transform:scaleY(0.81);letter-spacing:0.129px">Insurance</div>
<div class="t" style="right:1058.80px;top:658.32px;font-size:12.2px;transform:scaleY(0.8)">-</div>
<div class="t" style="right:952.80px;top:658.32px;font-size:12.2px;transform:scaleY(0.8)">(420.000)</div>
<div class="t" style="right:848.80px;top:658.32px;font-size:12.2px;transform:scaleY(0.8)">(432.600)</div>
<div class="t" style="right:744.80px;top:658.32px;font-size:12.2px;transform:scaleY(0.8)">(445.578)</div>
<div class="t" style="right:640.80px;top:658.32px;font-size:12.2px;transform:scaleY(0.8)">(458.945)</div>
<div class="t" style="right:536.80px;top:658.32px;font-size:12.2px;transform:scaleY(0.8)">(472.714)</div>
<div class="t" style="right:432.80px;top:658.32px;font-size:12.2px;transform:scaleY(0.8)">(486.895)</div>
<div class="t" style="right:328.80px;top:658.32px;font-size:12.2px;transform:scaleY(0.8)">(501.502)</div>
<div class="t" style="right:224.80px;top:658.32px;font-size:12.2px;transform:scaleY(0.8)">(516.547)</div>
<div class="t" style="right:120.80px;top:658.32px;font-size:12.2px;transform:scaleY(0.8)">(532.043)</div>
<div class="t" style="right:16.60px;top:658.32px;font-size:12.2px;transform:scaleY(0.8)">(548.005)</div>
<div class="t" style="left:42.00px;top:676.75px;font-size:12.1px;transform:scaleY(0.81);letter-spacing:0.125px">Miscellaneous</div>
<div class="t" style="right:952.80px;top:676.72px;font-size:12.2px;transform:scaleY(0.8)">(450.000)</div>
<div class="t" style="right:848.80px;top:676.72px;font-size:12.2px;transform:scaleY(0.8)">(463.500)</div>
<div class="t" style="right:744.80px;top:676.72px;font-size:12.2px;transform:scaleY(0.8)">(477.405)</div>
<div class="t" style="right:640.80px;top:676.72px;font-size:12.2px;transform:scaleY(0.8)">(491.727)</div>
<div class="t" style="right:536.80px;top:676.72px;font-size:12.2px;transform:scaleY(0.8)">(506.479)</div>
<div class="t" style="right:432.80px;top:676.72px;font-size:12.2px;transform:scaleY(0.8)">(521.673)</div>
<div class="t" style="right:328.80px;top:676.72px;font-size:12.2px;transform:scaleY(0.8)">(537.324)</div>
<div class="t" style="right:224.80px;top:676.72px;font-size:12.2px;transform:scaleY(0.8)">(553.443)</div>
<div class="t" style="right:120.80px;top:676.72px;font-size:12.2px;transform:scaleY(0.8)">(570.047)</div>
<div class="t" style="right:16.60px;top:676.72px;font-size:12.2px;transform:scaleY(0.8)">(587.148)</div>
<div class="t" style="left:42.00px;top:695.15px;font-size:12.1px;transform:scaleY(0.81);letter-spacing:-0.151px">Payments &amp; Processing Fees</div>
<div class="t" style="right:1058.80px;top:695.12px;font-size:12.2px;transform:scaleY(0.8)">-</div>
<div class="t" style="right:952.80px;top:695.12px;font-size:12.2px;transform:scaleY(0.8)">(62.947)</div>
<div class="t" style="right:848.80px;top:695.12px;font-size:12.2px;transform:scaleY(0.8)">(87.584)</div>
<div class="t" style="right:744.80px;top:695.12px;font-size:12.2px;transform:scaleY(0.8)">(89.543)</div>
<div class="t" style="right:640.80px;top:695.12px;font-size:12.2px;transform:scaleY(0.8)">(93.981)</div>
<div class="t" style="right:536.80px;top:695.12px;font-size:12.2px;transform:scaleY(0.8)">(106.810)</div>
<div class="t" style="right:432.80px;top:695.12px;font-size:12.2px;transform:scaleY(0.8)">(111.981)</div>
<div class="t" style="right:328.80px;top:695.12px;font-size:12.2px;transform:scaleY(0.8)">(126.647)</div>
<div class="t" style="right:224.80px;top:695.12px;font-size:12.2px;transform:scaleY(0.8)">(141.513)</div>
<div class="t" style="right:120.80px;top:695.12px;font-size:12.2px;transform:scaleY(0.8)">(156.121)</div>
<div class="t" style="right:16.60px;top:695.12px;font-size:12.2px;transform:scaleY(0.8)">(165.706)</div>
<div class="t b" style="left:33.00px;top:713.90px;font-size:11.3px;transform:scaleY(0.88);letter-spacing:0.126px;color:#111">Total Operating Expenses</div>
<div class="t b" style="right:1056.80px;top:713.52px;font-size:12.2px;transform:scaleY(0.8);color:#111">(1.715.000)</div>
<div class="t b" style="right:952.80px;top:713.52px;font-size:12.2px;transform:scaleY(0.8);color:#111">(11.156.947)</div>
<div class="t b" style="right:848.80px;top:713.52px;font-size:12.2px;transform:scaleY(0.8);color:#111">(16.564.284)</div>
<div class="t b" style="right:744.80px;top:713.52px;font-size:12.2px;transform:scaleY(0.8);color:#111">(17.229.918)</div>
<div class="t b" style="right:640.80px;top:713.52px;font-size:12.2px;transform:scaleY(0.8);color:#111">(18.024.270)</div>
<div class="t b" style="right:536.80px;top:713.52px;font-size:12.2px;transform:scaleY(0.8);color:#111">(18.689.296)</div>
<div class="t b" style="right:432.80px;top:713.52px;font-size:12.2px;transform:scaleY(0.8);color:#111">(19.429.783)</div>
<div class="t b" style="right:328.80px;top:713.52px;font-size:12.2px;transform:scaleY(0.8);color:#111">(20.128.758)</div>
<div class="t b" style="right:224.80px;top:713.52px;font-size:12.2px;transform:scaleY(0.8);color:#111">(20.978.080)</div>
<div class="t b" style="right:120.80px;top:713.52px;font-size:12.2px;transform:scaleY(0.8);color:#111">(21.726.498)</div>
<div class="t b" style="right:16.60px;top:713.52px;font-size:12.2px;transform:scaleY(0.8);color:#111">(22.447.902)</div>
<div class="t b" style="left:33.00px;top:750.70px;font-size:11.3px;transform:scaleY(0.88);letter-spacing:-0.244px;color:#111">EBITDA</div>
<div class="t b" style="right:1056.80px;top:750.32px;font-size:12.2px;transform:scaleY(0.8);color:#111">(1.715.000)</div>
<div class="t b" style="right:952.80px;top:750.32px;font-size:12.2px;transform:scaleY(0.8);color:#111">8.586.933</div>
<div class="t b" style="right:848.80px;top:750.32px;font-size:12.2px;transform:scaleY(0.8);color:#111">11.437.176</div>
<div class="t b" style="right:744.80px;top:750.32px;font-size:12.2px;transform:scaleY(0.8);color:#111">11.260.778</div>
<div class="t b" style="right:640.80px;top:750.32px;font-size:12.2px;transform:scaleY(0.8);color:#111">11.831.704</div>
<div class="t b" style="right:536.80px;top:750.32px;font-size:12.2px;transform:scaleY(0.8);color:#111">15.267.763</div>
<div class="t b" style="right:432.80px;top:750.32px;font-size:12.2px;transform:scaleY(0.8);color:#111">16.043.441</div>
<div class="t b" style="right:328.80px;top:750.32px;font-size:12.2px;transform:scaleY(0.8);color:#111">20.098.294</div>
<div class="t b" style="right:224.80px;top:750.32px;font-size:12.2px;transform:scaleY(0.8);color:#111">24.068.505</div>
<div class="t b" style="right:120.80px;top:750.32px;font-size:12.2px;transform:scaleY(0.8);color:#111">27.968.756</div>
<div class="t b" style="right:16.60px;top:750.32px;font-size:12.2px;transform:scaleY(0.8);color:#111">30.334.493</div>
<div class="t b i" style="left:33.00px;top:770.87px;font-size:9.6px;transform:scaleY(0.82);letter-spacing:-0.032px;color:#2f8290">EBITDA Margin%</div>
<div class="t b i" style="right:1054.50px;top:770.87px;font-size:9.6px;transform:scaleY(0.82);color:#2f8290">0%</div>
<div class="t b i" style="right:950.50px;top:770.87px;font-size:9.6px;transform:scaleY(0.82);color:#2f8290">14%</div>
<div class="t b i" style="right:846.50px;top:770.87px;font-size:9.6px;transform:scaleY(0.82);color:#2f8290">13%</div>
<div class="t b i" style="right:742.50px;top:770.87px;font-size:9.6px;transform:scaleY(0.82);color:#2f8290">13%</div>
<div class="t b i" style="right:638.50px;top:770.87px;font-size:9.6px;transform:scaleY(0.82);color:#2f8290">13%</div>
<div class="t b i" style="right:534.50px;top:770.87px;font-size:9.6px;transform:scaleY(0.82);color:#2f8290">14%</div>
<div class="t b i" style="right:430.50px;top:770.87px;font-size:9.6px;transform:scaleY(0.82);color:#2f8290">14%</div>
<div class="t b i" style="right:326.50px;top:770.87px;font-size:9.6px;transform:scaleY(0.82);color:#2f8290">16%</div>
<div class="t b i" style="right:222.50px;top:770.87px;font-size:9.6px;transform:scaleY(0.82);color:#2f8290">17%</div>
<div class="t b i" style="right:118.50px;top:770.87px;font-size:9.6px;transform:scaleY(0.82);color:#2f8290">18%</div>
<div class="t b i" style="right:13.30px;top:770.87px;font-size:9.6px;transform:scaleY(0.82);color:#2f8290">18%</div>
<div class="t" style="left:42.00px;top:805.55px;font-size:12.1px;transform:scaleY(0.81);letter-spacing:0.205px">Depreciation</div>
<div class="t" style="right:1058.80px;top:805.52px;font-size:12.2px;transform:scaleY(0.8)">-</div>
<div class="t" style="right:952.80px;top:805.52px;font-size:12.2px;transform:scaleY(0.8)">(1.373.333)</div>
<div class="t" style="right:848.80px;top:805.52px;font-size:12.2px;transform:scaleY(0.8)">(1.373.333)</div>
<div class="t" style="right:744.80px;top:805.52px;font-size:12.2px;transform:scaleY(0.8)">(1.375.333)</div>
<div class="t" style="right:640.80px;top:805.52px;font-size:12.2px;transform:scaleY(0.8)">(1.427.714)</div>
<div class="t" style="right:536.80px;top:805.52px;font-size:12.2px;transform:scaleY(0.8)">(1.527.714)</div>
<div class="t" style="right:432.80px;top:805.52px;font-size:12.2px;transform:scaleY(0.8)">(1.596.476)</div>
<div class="t" style="right:328.80px;top:805.52px;font-size:12.2px;transform:scaleY(0.8)">(1.896.476)</div>
<div class="t" style="right:224.80px;top:805.52px;font-size:12.2px;transform:scaleY(0.8)">(1.403.048)</div>
<div class="t" style="right:120.80px;top:805.52px;font-size:12.2px;transform:scaleY(0.8)">(1.653.905)</div>
<div class="t" style="right:16.60px;top:805.52px;font-size:12.2px;transform:scaleY(0.8)">(2.153.905)</div>
<div class="t b" style="left:33.00px;top:842.70px;font-size:11.3px;transform:scaleY(0.88);letter-spacing:0.136px;color:#111">Operating Income (EBIT)</div>
<div class="t b" style="right:1056.80px;top:842.32px;font-size:12.2px;transform:scaleY(0.8);color:#111">(1.715.000)</div>
<div class="t b" style="right:952.80px;top:842.32px;font-size:12.2px;transform:scaleY(0.8);color:#111">7.213.600</div>
<div class="t b" style="right:848.80px;top:842.32px;font-size:12.2px;transform:scaleY(0.8);color:#111">10.063.843</div>
<div class="t b" style="right:744.80px;top:842.32px;font-size:12.2px;transform:scaleY(0.8);color:#111">9.885.444</div>
<div class="t b" style="right:640.80px;top:842.32px;font-size:12.2px;transform:scaleY(0.8);color:#111">10.403.990</div>
<div class="t b" style="right:536.80px;top:842.32px;font-size:12.2px;transform:scaleY(0.8);color:#111">13.740.049</div>
<div class="t b" style="right:432.80px;top:842.32px;font-size:12.2px;transform:scaleY(0.8);color:#111">14.446.965</div>
<div class="t b" style="right:328.80px;top:842.32px;font-size:12.2px;transform:scaleY(0.8);color:#111">18.201.818</div>
<div class="t b" style="right:224.80px;top:842.32px;font-size:12.2px;transform:scaleY(0.8);color:#111">22.665.457</div>
<div class="t b" style="right:120.80px;top:842.32px;font-size:12.2px;transform:scaleY(0.8);color:#111">26.314.851</div>
<div class="t b" style="right:16.60px;top:842.32px;font-size:12.2px;transform:scaleY(0.8);color:#111">28.180.588</div>
<div class="t b i" style="left:33.00px;top:862.87px;font-size:9.6px;transform:scaleY(0.82);letter-spacing:0.182px;color:#2f8290">Operating Margin%</div>
<div class="t b i" style="right:1054.50px;top:862.87px;font-size:9.6px;transform:scaleY(0.82);color:#2f8290">0%</div>
<div class="t b i" style="right:950.50px;top:862.87px;font-size:9.6px;transform:scaleY(0.82);color:#2f8290">11%</div>
<div class="t b i" style="right:846.50px;top:862.87px;font-size:9.6px;transform:scaleY(0.82);color:#2f8290">11%</div>
<div class="t b i" style="right:742.50px;top:862.87px;font-size:9.6px;transform:scaleY(0.82);color:#2f8290">11%</div>
<div class="t b i" style="right:638.50px;top:862.87px;font-size:9.6px;transform:scaleY(0.82);color:#2f8290">11%</div>
<div class="t b i" style="right:534.50px;top:862.87px;font-size:9.6px;transform:scaleY(0.82);color:#2f8290">13%</div>
<div class="t b i" style="right:430.50px;top:862.87px;font-size:9.6px;transform:scaleY(0.82);color:#2f8290">13%</div>
<div class="t b i" style="right:326.50px;top:862.87px;font-size:9.6px;transform:scaleY(0.82);color:#2f8290">14%</div>
<div class="t b i" style="right:222.50px;top:862.87px;font-size:9.6px;transform:scaleY(0.82);color:#2f8290">16%</div>
<div class="t b i" style="right:118.50px;top:862.87px;font-size:9.6px;transform:scaleY(0.82);color:#2f8290">17%</div>
<div class="t b i" style="right:13.30px;top:862.87px;font-size:9.6px;transform:scaleY(0.82);color:#2f8290">17%</div>
<div class="t" style="left:42.00px;top:897.55px;font-size:12.1px;transform:scaleY(0.81);letter-spacing:0.062px">Interest Expense</div>
<div class="t" style="right:1058.80px;top:897.52px;font-size:12.2px;transform:scaleY(0.8)">-</div>
<div class="t" style="right:952.80px;top:897.52px;font-size:12.2px;transform:scaleY(0.8)">(772.000)</div>
<div class="t" style="right:848.80px;top:897.52px;font-size:12.2px;transform:scaleY(0.8)">(750.170)</div>
<div class="t" style="right:744.80px;top:897.52px;font-size:12.2px;transform:scaleY(0.8)">(692.843)</div>
<div class="t" style="right:640.80px;top:897.52px;font-size:12.2px;transform:scaleY(0.8)">(632.821)</div>
<div class="t" style="right:536.80px;top:897.52px;font-size:12.2px;transform:scaleY(0.8)">(569.978)</div>
<div class="t" style="right:432.80px;top:897.52px;font-size:12.2px;transform:scaleY(0.8)">(504.180)</div>
<div class="t" style="right:328.80px;top:897.52px;font-size:12.2px;transform:scaleY(0.8)">(463.151)</div>
<div class="t" style="right:224.80px;top:897.52px;font-size:12.2px;transform:scaleY(0.8)">(420.275)</div>
<div class="t" style="right:120.80px;top:897.52px;font-size:12.2px;transform:scaleY(0.8)">(375.469)</div>
<div class="t" style="right:16.60px;top:897.52px;font-size:12.2px;transform:scaleY(0.8)">(328.648)</div>
<div class="t b" style="left:33.00px;top:934.70px;font-size:11.3px;transform:scaleY(0.88);letter-spacing:-0.029px;color:#111">Earnings Before taxes (EBT)</div>
<div class="t b" style="right:1056.80px;top:934.32px;font-size:12.2px;transform:scaleY(0.8);color:#111">(1.715.000)</div>
<div class="t b" style="right:952.80px;top:934.32px;font-size:12.2px;transform:scaleY(0.8);color:#111">6.441.600</div>
<div class="t b" style="right:848.80px;top:934.32px;font-size:12.2px;transform:scaleY(0.8);color:#111">9.313.673</div>
<div class="t b" style="right:744.80px;top:934.32px;font-size:12.2px;transform:scaleY(0.8);color:#111">9.192.602</div>
<div class="t b" style="right:640.80px;top:934.32px;font-size:12.2px;transform:scaleY(0.8);color:#111">9.771.169</div>
<div class="t b" style="right:536.80px;top:934.32px;font-size:12.2px;transform:scaleY(0.8);color:#111">13.170.071</div>
<div class="t b" style="right:432.80px;top:934.32px;font-size:12.2px;transform:scaleY(0.8);color:#111">13.942.785</div>
<div class="t b" style="right:328.80px;top:934.32px;font-size:12.2px;transform:scaleY(0.8);color:#111">17.738.667</div>
<div class="t b" style="right:224.80px;top:934.32px;font-size:12.2px;transform:scaleY(0.8);color:#111">22.245.183</div>
<div class="t b" style="right:120.80px;top:934.32px;font-size:12.2px;transform:scaleY(0.8);color:#111">25.939.382</div>
<div class="t b" style="right:16.60px;top:934.32px;font-size:12.2px;transform:scaleY(0.8);color:#111">27.851.940</div>
<div class="t" style="left:42.00px;top:971.15px;font-size:12.1px;transform:scaleY(0.81);letter-spacing:0.089px">Income Taxes</div>
<div class="t" style="right:1058.80px;top:971.12px;font-size:12.2px;transform:scaleY(0.8)">-</div>
<div class="t" style="right:952.80px;top:971.12px;font-size:12.2px;transform:scaleY(0.8)">(1.610.400)</div>
<div class="t" style="right:848.80px;top:971.12px;font-size:12.2px;transform:scaleY(0.8)">(2.328.418)</div>
<div class="t" style="right:744.80px;top:971.12px;font-size:12.2px;transform:scaleY(0.8)">(2.298.150)</div>
<div class="t" style="right:640.80px;top:971.12px;font-size:12.2px;transform:scaleY(0.8)">(2.442.792)</div>
<div class="t" style="right:536.80px;top:971.12px;font-size:12.2px;transform:scaleY(0.8)">(3.292.518)</div>
<div class="t" style="right:432.80px;top:971.12px;font-size:12.2px;transform:scaleY(0.8)">(3.485.696)</div>
<div class="t" style="right:328.80px;top:971.12px;font-size:12.2px;transform:scaleY(0.8)">(4.434.667)</div>
<div class="t" style="right:224.80px;top:971.12px;font-size:12.2px;transform:scaleY(0.8)">(5.561.296)</div>
<div class="t" style="right:120.80px;top:971.12px;font-size:12.2px;transform:scaleY(0.8)">(6.484.846)</div>
<div class="t" style="right:16.60px;top:971.12px;font-size:12.2px;transform:scaleY(0.8)">(6.962.985)</div>
<div class="t b" style="left:33.00px;top:1008.30px;font-size:11.3px;transform:scaleY(0.88);letter-spacing:0.319px;color:#111">Net Income</div>
<div class="t b" style="right:1056.80px;top:1007.92px;font-size:12.2px;transform:scaleY(0.8);color:#111">(1.715.000)</div>
<div class="t b" style="right:952.80px;top:1007.92px;font-size:12.2px;transform:scaleY(0.8);color:#111">4.831.200</div>
<div class="t b" style="right:848.80px;top:1007.92px;font-size:12.2px;transform:scaleY(0.8);color:#111">6.985.255</div>
<div class="t b" style="right:744.80px;top:1007.92px;font-size:12.2px;transform:scaleY(0.8);color:#111">6.894.451</div>
<div class="t b" style="right:640.80px;top:1007.92px;font-size:12.2px;transform:scaleY(0.8);color:#111">7.328.377</div>
<div class="t b" style="right:536.80px;top:1007.92px;font-size:12.2px;transform:scaleY(0.8);color:#111">9.877.554</div>
<div class="t b" style="right:432.80px;top:1007.92px;font-size:12.2px;transform:scaleY(0.8);color:#111">10.457.088</div>
<div class="t b" style="right:328.80px;top:1007.92px;font-size:12.2px;transform:scaleY(0.8);color:#111">13.304.000</div>
<div class="t b" style="right:224.80px;top:1007.92px;font-size:12.2px;transform:scaleY(0.8);color:#111">16.683.887</div>
<div class="t b" style="right:120.80px;top:1007.92px;font-size:12.2px;transform:scaleY(0.8);color:#111">19.454.537</div>
<div class="t b" style="right:16.60px;top:1007.92px;font-size:12.2px;transform:scaleY(0.8);color:#111">20.888.955</div>
<div class="t b i" style="left:33.00px;top:1028.47px;font-size:9.6px;transform:scaleY(0.82);letter-spacing:0.152px;color:#2f8290">Net Profit Margin%</div>
<div class="t b i" style="right:1054.50px;top:1028.47px;font-size:9.6px;transform:scaleY(0.82);color:#2f8290">0%</div>
<div class="t b i" style="right:950.50px;top:1028.47px;font-size:9.6px;transform:scaleY(0.82);color:#2f8290">8%</div>
<div class="t b i" style="right:846.50px;top:1028.47px;font-size:9.6px;transform:scaleY(0.82);color:#2f8290">8%</div>
<div class="t b i" style="right:742.50px;top:1028.47px;font-size:9.6px;transform:scaleY(0.82);color:#2f8290">8%</div>
<div class="t b i" style="right:638.50px;top:1028.47px;font-size:9.6px;transform:scaleY(0.82);color:#2f8290">8%</div>
<div class="t b i" style="right:534.50px;top:1028.47px;font-size:9.6px;transform:scaleY(0.82);color:#2f8290">9%</div>
<div class="t b i" style="right:430.50px;top:1028.47px;font-size:9.6px;transform:scaleY(0.82);color:#2f8290">9%</div>
<div class="t b i" style="right:326.50px;top:1028.47px;font-size:9.6px;transform:scaleY(0.82);color:#2f8290">11%</div>
<div class="t b i" style="right:222.50px;top:1028.47px;font-size:9.6px;transform:scaleY(0.82);color:#2f8290">12%</div>
<div class="t b i" style="right:118.50px;top:1028.47px;font-size:9.6px;transform:scaleY(0.82);color:#2f8290">12%</div>
<div class="t b i" style="right:13.30px;top:1028.47px;font-size:9.6px;transform:scaleY(0.82);color:#2f8290">13%</div>
</body>
</html>
